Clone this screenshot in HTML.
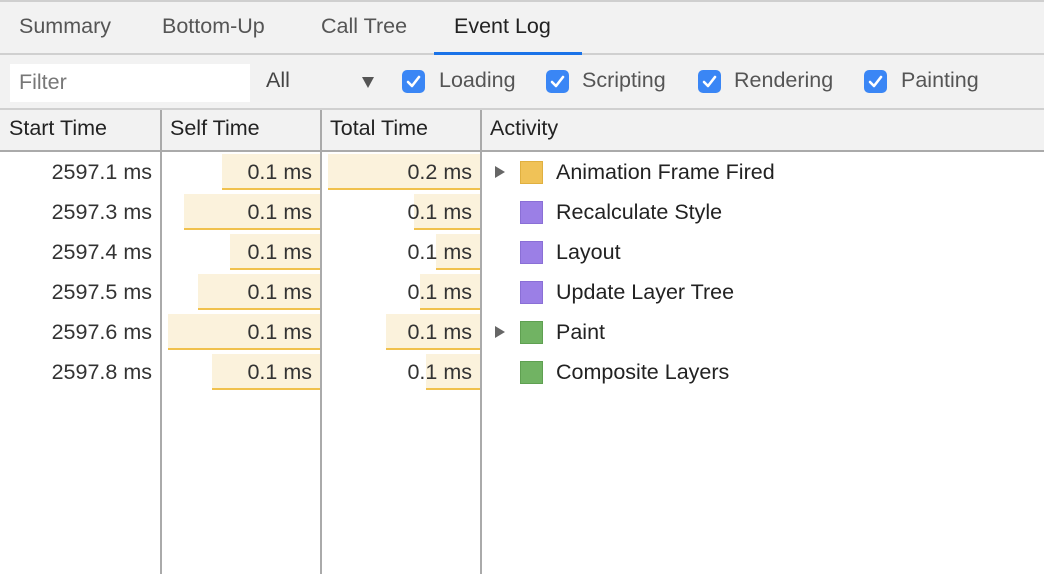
<!DOCTYPE html>
<html><head><style>
body{margin:0;width:1044px;height:574px;overflow:hidden;background:#fff;font-family:"Liberation Sans",Helvetica,sans-serif;position:relative}
.a{position:absolute}
.t{font-size:21.5px;color:#555;top:14px}
.hd{font-size:21.5px;color:#222;top:116px}
.cb{position:absolute;top:70px;width:23px;height:23px;border-radius:5px;background:#3a86f5}
.cb svg{position:absolute;left:0;top:0}
.lb{position:absolute;top:68px;font-size:21.5px;color:#555}
.cell{position:absolute;font-size:21.5px;color:#333;height:40px;line-height:40px}
.bar{position:absolute;height:34px;background:#fbf2dc;border-bottom:2px solid #f0c14d}
.sq{position:absolute;left:520px;width:21px;height:21px}
.tri{position:absolute;left:495px;width:0;height:0;border-left:10px solid #666;border-top:6px solid transparent;border-bottom:6px solid transparent}
</style></head><body>
<div class="a" style="left:0;top:0;width:1044px;height:2px;background:#cfcfcf"></div>
<div class="a" style="left:0;top:2px;width:1044px;height:107px;background:#f2f2f2"></div>
<div class="a" style="left:0;top:53px;width:1044px;height:2px;background:#d0d0d0"></div>
<div class="a t" style="left:19px">Summary</div>
<div class="a t" style="left:162px">Bottom-Up</div>
<div class="a t" style="left:321px">Call Tree</div>
<div class="a t" style="left:454px;color:#222">Event Log</div>
<div class="a" style="left:434px;top:52px;width:148px;height:3px;background:#1a73e8"></div>
<div class="a" style="left:10px;top:64px;width:240px;height:38px;background:#fff"></div>
<div class="a" style="left:19px;top:70px;font-size:21.5px;color:#777">Filter</div>
<div class="a" style="left:266px;top:68px;font-size:21.5px;color:#444">All</div>
<div class="a" style="left:362px;top:77px;border-top:11px solid #555;border-left:6px solid transparent;border-right:6px solid transparent;width:0;height:0"></div>
<div class="cb" style="left:402px"><svg width="23" height="23"><path d="M6 12l4 4 7-9" stroke="#fff" stroke-width="2.6" fill="none" stroke-linecap="round" stroke-linejoin="round"/></svg></div>
<div class="lb" style="left:439px">Loading</div>
<div class="cb" style="left:546px"><svg width="23" height="23"><path d="M6 12l4 4 7-9" stroke="#fff" stroke-width="2.6" fill="none" stroke-linecap="round" stroke-linejoin="round"/></svg></div>
<div class="lb" style="left:582px">Scripting</div>
<div class="cb" style="left:698px"><svg width="23" height="23"><path d="M6 12l4 4 7-9" stroke="#fff" stroke-width="2.6" fill="none" stroke-linecap="round" stroke-linejoin="round"/></svg></div>
<div class="lb" style="left:734px">Rendering</div>
<div class="cb" style="left:864px"><svg width="23" height="23"><path d="M6 12l4 4 7-9" stroke="#fff" stroke-width="2.6" fill="none" stroke-linecap="round" stroke-linejoin="round"/></svg></div>
<div class="lb" style="left:901px">Painting</div>
<div class="a" style="left:0;top:108px;width:1044px;height:2px;background:#d0d0d0"></div>
<div class="a" style="left:0;top:110px;width:1044px;height:40px;background:#f2f2f2"></div>
<div class="a" style="left:0;top:150px;width:1044px;height:2px;background:#aaa"></div>
<div class="a hd" style="left:9px">Start Time</div>
<div class="a hd" style="left:170px">Self Time</div>
<div class="a hd" style="left:330px">Total Time</div>
<div class="a hd" style="left:490px">Activity</div>
<div class="a" style="left:160px;top:110px;width:2px;height:464px;background:#aaa"></div>
<div class="a" style="left:320px;top:110px;width:2px;height:464px;background:#aaa"></div>
<div class="a" style="left:480px;top:110px;width:2px;height:464px;background:#aaa"></div>

<!-- bars -->
<div class="bar" style="top:154px;left:222px;width:98px"></div>
<div class="bar" style="top:194px;left:184px;width:136px"></div>
<div class="bar" style="top:234px;left:230px;width:90px"></div>
<div class="bar" style="top:274px;left:198px;width:122px"></div>
<div class="bar" style="top:314px;left:168px;width:152px"></div>
<div class="bar" style="top:354px;left:212px;width:108px"></div>
<div class="bar" style="top:154px;left:328px;width:152px"></div>
<div class="bar" style="top:194px;left:414px;width:66px"></div>
<div class="bar" style="top:234px;left:436px;width:44px"></div>
<div class="bar" style="top:274px;left:420px;width:60px"></div>
<div class="bar" style="top:314px;left:386px;width:94px"></div>
<div class="bar" style="top:354px;left:426px;width:54px"></div>

<div class="cell" style="top:152px;right:892px">2597.1 ms</div>
<div class="cell" style="top:192px;right:892px">2597.3 ms</div>
<div class="cell" style="top:232px;right:892px">2597.4 ms</div>
<div class="cell" style="top:272px;right:892px">2597.5 ms</div>
<div class="cell" style="top:312px;right:892px">2597.6 ms</div>
<div class="cell" style="top:352px;right:892px">2597.8 ms</div>
<div class="cell" style="top:152px;right:732px">0.1 ms</div>
<div class="cell" style="top:192px;right:732px">0.1 ms</div>
<div class="cell" style="top:232px;right:732px">0.1 ms</div>
<div class="cell" style="top:272px;right:732px">0.1 ms</div>
<div class="cell" style="top:312px;right:732px">0.1 ms</div>
<div class="cell" style="top:352px;right:732px">0.1 ms</div>
<div class="cell" style="top:152px;right:572px">0.2 ms</div>
<div class="cell" style="top:192px;right:572px">0.1 ms</div>
<div class="cell" style="top:232px;right:572px">0.1 ms</div>
<div class="cell" style="top:272px;right:572px">0.1 ms</div>
<div class="cell" style="top:312px;right:572px">0.1 ms</div>
<div class="cell" style="top:352px;right:572px">0.1 ms</div>

<div class="tri" style="top:166px"></div>
<div class="tri" style="top:326px"></div>
<div class="sq" style="top:161px;background:#f0c257;border:1px solid #e0b040;width:21px;height:21px"></div>
<div class="sq" style="top:201px;background:#9b7fe6;border:1px solid #8a6fd6"></div>
<div class="sq" style="top:241px;background:#9b7fe6;border:1px solid #8a6fd6"></div>
<div class="sq" style="top:281px;background:#9b7fe6;border:1px solid #8a6fd6"></div>
<div class="sq" style="top:321px;background:#71b363;border:1px solid #5fa051"></div>
<div class="sq" style="top:361px;background:#71b363;border:1px solid #5fa051"></div>
<div class="cell" style="top:152px;left:556px;color:#222">Animation Frame Fired</div>
<div class="cell" style="top:192px;left:556px;color:#222">Recalculate Style</div>
<div class="cell" style="top:232px;left:556px;color:#222">Layout</div>
<div class="cell" style="top:272px;left:556px;color:#222">Update Layer Tree</div>
<div class="cell" style="top:312px;left:556px;color:#222">Paint</div>
<div class="cell" style="top:352px;left:556px;color:#222">Composite Layers</div>
</body></html>
